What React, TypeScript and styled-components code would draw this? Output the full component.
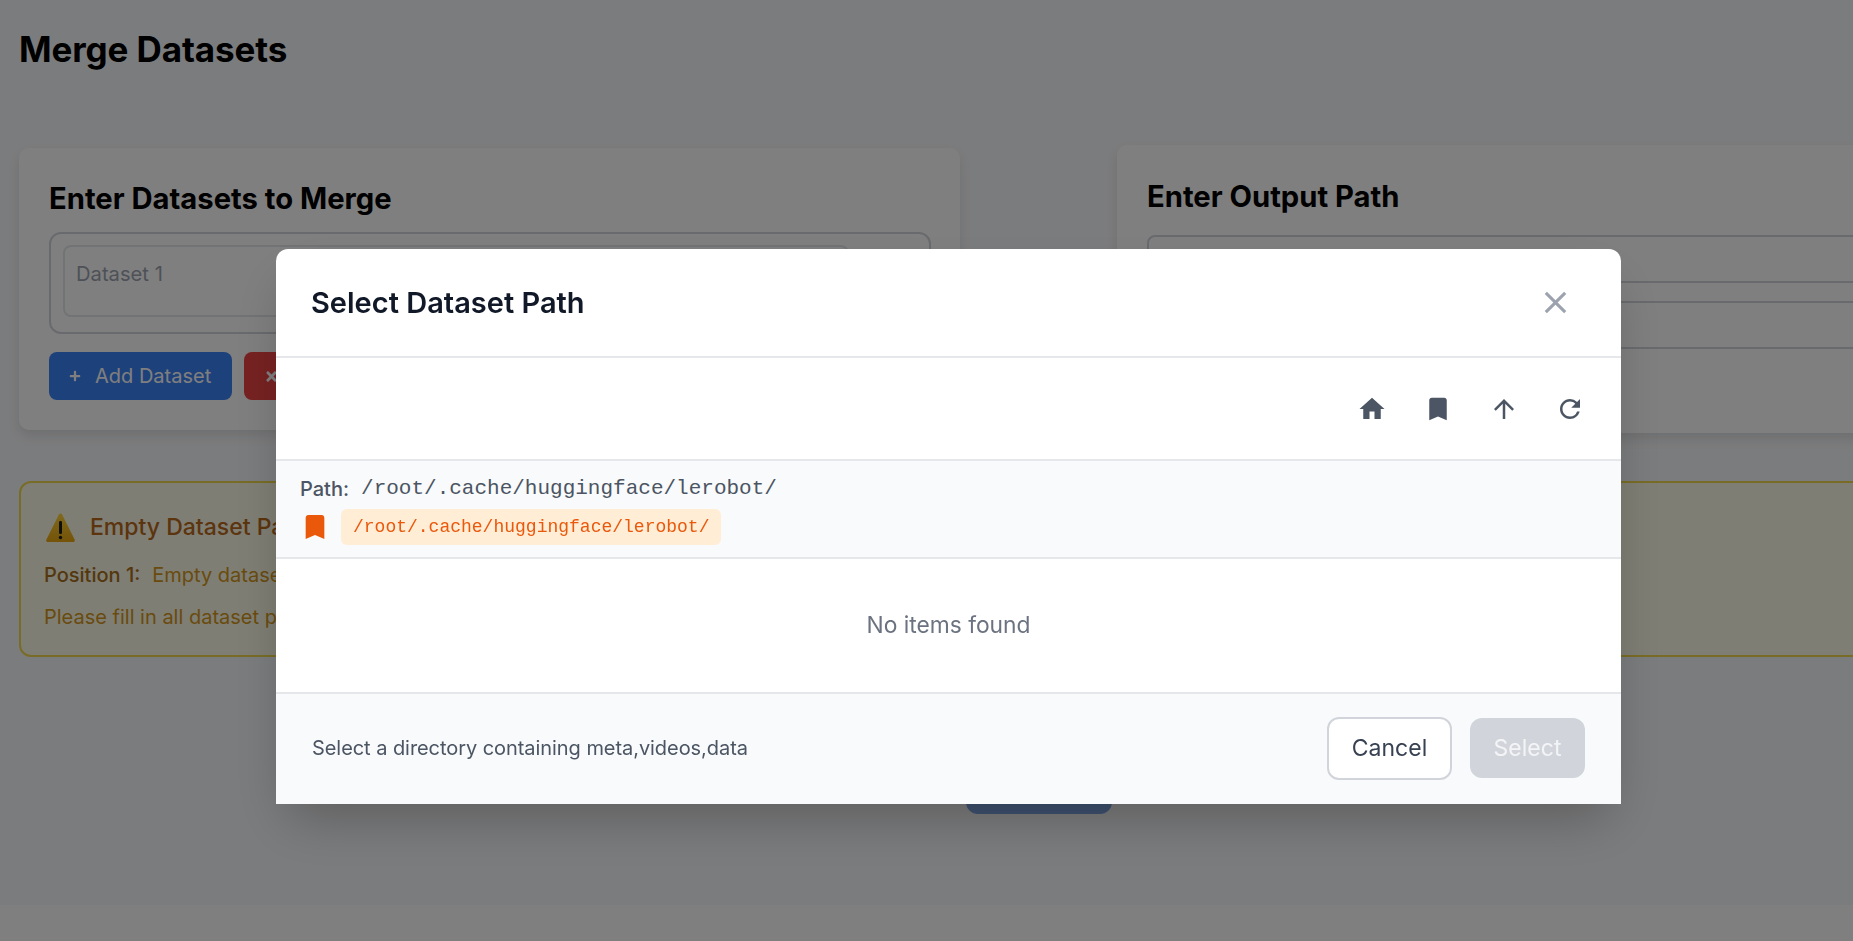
import React from "react";
import styled, { createGlobalStyle } from "styled-components";
import { FaPlus, FaTimes } from "react-icons/fa";
import { MdArrowUpward, MdBookmark, MdClose, MdHome, MdRefresh } from "react-icons/md";

const GlobalStyle = createGlobalStyle`
  html, body {
    margin: 0;
    height: 100%;
    overflow: hidden;
    background: #ffffff;
    font-family: Inter, "Noto Sans", sans-serif;
  }
  * { box-sizing: border-box; }
`;

const Main = styled.main`
  width: 2077px;
  height: 905px;
  padding: 0 19px;
  background: #f7f8fa;
`;

const PageTitle = styled.h1`
  margin: 0;
  padding-top: 27px;
  height: 145px;
  font-size: 35px;
  line-height: 44px;
  font-weight: 700;
  letter-spacing: -0.1px;
  color: #000;
`;

const Columns = styled.div`
  display: flex;
  align-items: center;
  justify-content: space-between;
  height: 288px;
`;

const Card = styled.section<{ $height: number; $top: number }>`
  width: 941px;
  height: ${(p) => p.$height}px;
  padding: ${(p) => p.$top}px 29px 0 30px;
  background: #fff;
  border-radius: 10px;
  box-shadow: 0 6px 12px rgba(0, 0, 0, 0.1);
`;

const CardTitle = styled.h2<{ $gap: number }>`
  margin: 0 0 ${(p) => p.$gap}px;
  font-size: 29.2px;
  line-height: 36px;
  font-weight: 700;
  color: #000;
`;

const DatasetBox = styled.div`
  height: 102px;
  padding: 11px 12px;
  border: 2px solid #d1d5db;
  border-radius: 12px;
`;

const DatasetField = styled.div`
  width: 786px;
  height: 72px;
  padding: 13px 11px;
  border: 2px solid #e5e7eb;
  border-radius: 8px;
  font-size: 20.2px;
  line-height: 28px;
  color: #9ca3af;
`;

const ButtonRow = styled.div`
  display: flex;
  gap: 12px;
  margin-top: 18px;
`;

const ActionButton = styled.div<{ $color: string; $width: number }>`
  display: flex;
  align-items: center;
  gap: 14px;
  width: ${(p) => p.$width}px;
  height: 48px;
  padding-left: 20px;
  border-radius: 8px;
  background: ${(p) => p.$color};
  color: #fff;
  font-size: 20px;
  font-weight: 400;
  white-space: nowrap;
  svg {
    flex: none;
  }
`;

const PathInput = styled.div`
  height: 48px;
  margin-bottom: 18px;
  border: 2px solid #d1d5db;
  border-radius: 8px;
`;

const Alert = styled.section`
  margin-top: 48px;
  height: 176px;
  padding: 27px 23px;
  background: #fefce8;
  border: 2px solid #f2d94e;
  border-radius: 12px;
`;

const AlertTitle = styled.div`
  display: flex;
  align-items: center;
  gap: 14px;
  padding-left: 1px;
  height: 34px;
  font-size: 23px;
  font-weight: 500;
  color: #b8691a;
`;

const AlertLine = styled.div`
  margin-top: 17px;
  height: 29px;
  font-size: 20px;
  line-height: 29px;
  color: #d3971a;
  b {
    font-weight: 500;
    color: #a8701a;
    margin-right: 12px;
  }
  & + & {
    margin-top: 13px;
  }
`;

const MergeButton = styled.div`
  width: 146px;
  height: 48px;
  margin: 109px auto 0;
  background: #7fa4e0;
  border-radius: 12px;
`;

const Overlay = styled.div`
  position: fixed;
  inset: 0;
  display: flex;
  align-items: center;
  justify-content: center;
  padding: 112px 0 0 44px;
  background: rgba(0, 0, 0, 0.5);
`;

const Modal = styled.div`
  flex: none;
  width: 1345px;
  height: 555px;
  background: #fff;
  border-radius: 12px 12px 0 0;
  box-shadow: 0 25px 50px -12px rgba(0, 0, 0, 0.25);
  display: flex;
  flex-direction: column;
`;

const ModalHeader = styled.header`
  height: 109px;
  padding: 0 35px;
  display: flex;
  align-items: center;
  justify-content: space-between;
  border-bottom: 2px solid #e5e7eb;
`;

const ModalTitle = styled.h3`
  margin: 0;
  font-size: 29px;
  font-weight: 600;
  color: #111827;
`;

const CloseIcon = styled(MdClose)`
  display: block;
  color: #9ca3af;
  margin-right: 12px;
`;

const Toolbar = styled.div`
  height: 103px;
  padding-right: 36px;
  display: flex;
  align-items: center;
  justify-content: flex-end;
  gap: 36px;
  color: #4b5563;
  border-bottom: 2px solid #e5e7eb;
  svg {
    display: block;
  }
`;

const PathPanel = styled.div`
  height: 98px;
  padding: 9px 20px 0 24px;
  background: #f9fafb;
  border-bottom: 2px solid #e5e7eb;
`;

const PathRow = styled.div`
  display: flex;
  align-items: center;
  gap: 12px;
  height: 36px;
  color: #4b5563;
`;

const PathLabel = styled.span`
  font-size: 20px;
  font-weight: 500;
  position: relative;
  top: 1px;
`;

const PathValue = styled.span`
  font-family: "Liberation Mono", monospace;
  font-size: 21px;
`;

const BookmarkRow = styled.div`
  display: flex;
  align-items: center;
  gap: 10px;
  margin-top: 3px;
  margin-left: -1px;
  color: #ea580c;
  svg {
    display: block;
    flex: none;
  }
`;

const BookmarkChip = styled.span`
  height: 36px;
  padding: 0 12px;
  display: flex;
  align-items: center;
  background: #ffedd5;
  border-radius: 6px;
  font-family: "Liberation Mono", monospace;
  font-size: 18px;
`;

const Listing = styled.div`
  flex: 1;
  display: flex;
  align-items: center;
  justify-content: center;
  padding-bottom: 2px;
  font-size: 22.8px;
  color: #6b7280;
`;

const ModalFooter = styled.footer`
  height: 112px;
  padding: 0 36px 2px;
  display: flex;
  align-items: center;
  justify-content: space-between;
  background: #f9fafb;
  border-top: 2px solid #e5e7eb;
`;

const FooterHint = styled.span`
  font-size: 20px;
  letter-spacing: -0.06px;
  color: #4b5563;
`;

const FooterActions = styled.div`
  display: flex;
  align-items: center;
  gap: 18px;
`;

const FooterButton = styled.button<{ $primary?: boolean }>`
  height: ${(p) => (p.$primary ? 60 : 63)}px;
  width: ${(p) => (p.$primary ? 115 : 125)}px;
  padding: 0;
  font-family: inherit;
  font-size: 23px;
  border-radius: 12px;
  border: ${(p) => (p.$primary ? "none" : "2px solid #d1d5db")};
  background: ${(p) => (p.$primary ? "#d1d5db" : "#fff")};
  color: ${(p) => (p.$primary ? "#f3f4f6" : "#374151")};
`;

const WarningIcon = () => (
  <svg width="31" height="31" viewBox="0 0 31 31" aria-hidden="true">
    <defs>
      <linearGradient id="warn" x1="0" y1="0" x2="0" y2="1">
        <stop offset="0" stopColor="#ffd23a" />
        <stop offset="1" stopColor="#e9a80f" />
      </linearGradient>
    </defs>
    <path
      d="M15.5 1.5 C16.5 1.5 17 2.2 17.6 3.4 L29.6 27.4 C30.3 28.9 29.5 30 28 30 H3 C1.5 30 0.7 28.9 1.4 27.4 L13.4 3.4 C14 2.2 14.5 1.5 15.5 1.5 Z"
      fill="url(#warn)"
    />
    <rect x="14" y="9" width="3" height="13" rx="1.2" fill="#1f1f1f" />
    <circle cx="15.5" cy="25.5" r="1.7" fill="#1f1f1f" />
  </svg>
);

export default function App() {
  return (
    <>
      <GlobalStyle />
      <Main>
        <PageTitle>Merge Datasets</PageTitle>
        <Columns>
          <Card $height={282} $top={33}>
            <CardTitle $gap={15}>Enter Datasets to Merge</CardTitle>
            <DatasetBox>
              <DatasetField>Dataset 1</DatasetField>
            </DatasetBox>
            <ButtonRow>
              <ActionButton $color="#3b82f6" $width={183}>
                <FaPlus size={12} /> Add Dataset
              </ActionButton>
              <ActionButton $color="#ef4444" $width={180}>
                <FaTimes size={15} />
              </ActionButton>
            </ButtonRow>
          </Card>
          <Card $height={288} $top={34}>
            <CardTitle $gap={20}>Enter Output Path</CardTitle>
            <PathInput />
            <PathInput />
          </Card>
        </Columns>
        <Alert>
          <AlertTitle>
            <WarningIcon />
            Empty Dataset Paths
          </AlertTitle>
          <AlertLine>
            <b>Position 1:</b>Empty dataset path
          </AlertLine>
          <AlertLine>Please fill in all dataset paths</AlertLine>
        </Alert>
        <MergeButton />
      </Main>
      <Overlay>
        <Modal>
          <ModalHeader>
            <ModalTitle>Select Dataset Path</ModalTitle>
            <CloseIcon size={37} />
          </ModalHeader>
          <Toolbar>
            <MdHome size={30} />
            <MdBookmark size={30} />
            <MdArrowUpward size={30} />
            <MdRefresh size={30} />
          </Toolbar>
          <PathPanel>
            <PathRow>
              <PathLabel>Path:</PathLabel>
              <PathValue>/root/.cache/huggingface/lerobot/</PathValue>
            </PathRow>
            <BookmarkRow>
              <MdBookmark size={32} />
              <BookmarkChip>/root/.cache/huggingface/lerobot/</BookmarkChip>
            </BookmarkRow>
          </PathPanel>
          <Listing>No items found</Listing>
          <ModalFooter>
            <FooterHint>Select a directory containing meta,videos,data</FooterHint>
            <FooterActions>
              <FooterButton>Cancel</FooterButton>
              <FooterButton $primary>Select</FooterButton>
            </FooterActions>
          </ModalFooter>
        </Modal>
      </Overlay>
    </>
  );
}
